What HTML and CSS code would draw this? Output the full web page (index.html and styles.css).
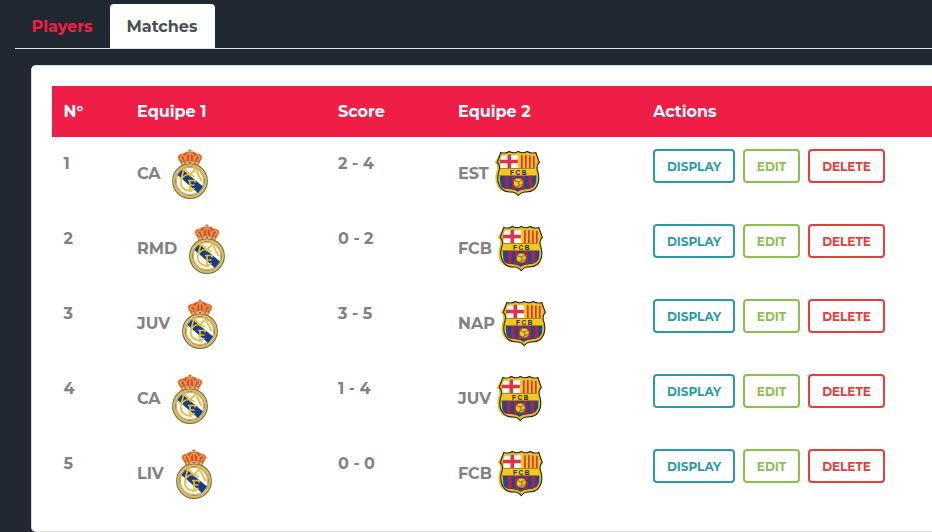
FILE: index.html
```html
<!DOCTYPE html>
<html lang="en">
<head>
<meta charset="utf-8">
<title>Matches</title>
<link rel="stylesheet" href="styles.css">
</head>
<body>
<svg class="defs" width="0" height="0" aria-hidden="true">
  <symbol id="madrid" viewBox="0 0 50 50">
    <circle cx="25" cy="32" r="17.2" fill="#fff" stroke="#756b4c" stroke-width="1.4"/>
    <circle cx="25" cy="32" r="16" fill="none" stroke="#e5b63c" stroke-width="1.6"/>
    <circle cx="25" cy="32" r="14.7" fill="none" stroke="#667280" stroke-width=".9"/>
    <circle cx="25" cy="32" r="13.6" fill="#fff" stroke="#dfb044" stroke-width="1.1"/>
    <path d="M12.500 26l4.500-6L38 37.500l-5 6.500z" fill="#173f83"/>
    <path d="M16 20.500q5-1 9 6 4-7 9-6M18.500 21.500l-2.500 9M31.500 22l5 10M29.500 28a8 8 0 1 0 0 11" fill="none" stroke="#edb936" stroke-width="1.700"/>
    <path d="M23 31.500h7v2M25 31.500V42M25 36h4.500M23 42h4" fill="none" stroke="#edb936" stroke-width="1.700"/>
    <path d="M16 14l-3-5q0-4 5-4 3-3 7-2 4-1 7 2 5 0 5 4l-3 5q-9-3-18 0z" fill="#d94d36" stroke="#d79b4e"/>
    <path d="M18 12l-3-3q1-3 4-2l2 5M21 11q-1-6 4-7 5 1 4 7M29 12l2-5q4-1 4 2l-3 3M25 5v7" fill="none" stroke="#f0b449" stroke-width="1.100"/>
    <path d="M16 13q9-3 18 0l-1 3q-8-2-16 0z" fill="#e5b45b" stroke="#a86439" stroke-width=".7"/>
    <path d="M19 14h2m3-.5h2m3 .5h2" stroke="#be344c" stroke-width="1.200"/>
    <path d="M25 0v4m-1.500-2.500h3" stroke="#c77843" stroke-width="1"/>
  </symbol>
  <symbol id="barca" viewBox="-.3 0 50 50">
    <path fill="#f2c91f" d="M8 5q5 1.500 8-1 4 2.500 9 0 5 2.500 9 0 3 2.500 8 1l3 8q-4 4-1 11 2 10-3 15-4 3-10 3-5 0-7 3-2-3-7-3-6 0-10-3-5-5-3-15 3-7-1-11z"/>
    <path fill="#fff" d="M9 6h15.500v13H7.500V14L6.500 12z"/>
    <path d="M16 5v14M6.500 12.500h18" stroke="#dd3146" stroke-width="3.600"/>
    <path d="M28.500 6v13M32.500 6v13M36.500 6v13M40.500 6.500V19" stroke="#d83343" stroke-width="1.800"/>
    <path fill="#24488b" d="M6.500 27h37l-.5 8q-1 5-5 5-9 0-13 3.500-4-3.500-13-3.500-4 0-5-5z"/>
    <path d="M13.500 27v13M20.500 27v14M29.500 27v14M37 27v13" stroke="#ad2444" stroke-width="3.800"/>
    <circle cx="25" cy="34" r="4.900" fill="#f0c62b" stroke="#745627" stroke-width=".7"/>
    <path d="M21.500 32l4 1 3-2M25.500 33v4l-3 1M25.500 37l4-2" fill="none" stroke="#745627" stroke-width=".8"/>
    <path d="M7 19.500h36M6 26.500h38" stroke="#725621" stroke-width=".6"/>
    <path d="M8 5q5 1.500 8-1 4 2.500 9 0 5 2.500 9 0 3 2.500 8 1l3 8q-4 4-1 11 2 10-3 15-4 3-10 3-5 0-7 3-2-3-7-3-6 0-10-3-5-5-3-15 3-7-1-11z" fill="none" stroke="#e8bf24" stroke-width="2.500"/>
    <path d="M7.500 3.500q5 1.500 8.500-1 4 2.500 9 0 5 2.500 9 0 3.500 2.500 8.500 1l3.500 10q-4 3-1 11 2 10-4 16-4 3-10 2.500-4 .5-6 3.500-2-3-6-3.500-6 .5-10-2.500-6-6-4-16 3-8-1-11z" fill="none" stroke="#25221e" stroke-width="1.100"/>
  </symbol>
</svg>

<nav class="tabs">
  <a class="tab">Players</a>
  <a class="tab active">Matches</a>
</nav>

<main class="card">
  <div class="row head"><div>N°</div><div>Equipe 1</div><div>Score</div><div>Equipe 2</div><div>Actions</div></div>
  <div class="row"><div class="value">1</div><div class="team"><span class="ca">CA</span><svg class="crest"><use href="#madrid"/></svg></div><div class="value">2 - 4</div><div class="team"><span class="est">EST</span><svg class="crest"><use href="#barca"/><text x="26" y="25.500" text-anchor="middle" class="crest-text">FCB</text></svg></div><div class="actions"><button class="btn display">DISPLAY</button><button class="btn edit">EDIT</button><button class="btn delete">DELETE</button></div></div>
  <div class="row"><div class="value">2</div><div class="team"><span class="rmd">RMD</span><svg class="crest"><use href="#madrid"/></svg></div><div class="value">0 - 2</div><div class="team"><span class="fcb">FCB</span><svg class="crest"><use href="#barca"/><text x="26" y="25.500" text-anchor="middle" class="crest-text">FCB</text></svg></div><div class="actions"><button class="btn display">DISPLAY</button><button class="btn edit">EDIT</button><button class="btn delete">DELETE</button></div></div>
  <div class="row"><div class="value">3</div><div class="team"><span class="juv">JUV</span><svg class="crest"><use href="#madrid"/></svg></div><div class="value">3 - 5</div><div class="team"><span class="nap">NAP</span><svg class="crest"><use href="#barca"/><text x="26" y="25.500" text-anchor="middle" class="crest-text">FCB</text></svg></div><div class="actions"><button class="btn display">DISPLAY</button><button class="btn edit">EDIT</button><button class="btn delete">DELETE</button></div></div>
  <div class="row"><div class="value">4</div><div class="team"><span class="ca">CA</span><svg class="crest"><use href="#madrid"/></svg></div><div class="value">1 - 4</div><div class="team"><span class="juv-away">JUV</span><svg class="crest"><use href="#barca"/><text x="26" y="25.500" text-anchor="middle" class="crest-text">FCB</text></svg></div><div class="actions"><button class="btn display">DISPLAY</button><button class="btn edit">EDIT</button><button class="btn delete">DELETE</button></div></div>
  <div class="row"><div class="value">5</div><div class="team"><span class="liv">LIV</span><svg class="crest"><use href="#madrid"/></svg></div><div class="value">0 - 0</div><div class="team"><span class="fcb">FCB</span><svg class="crest"><use href="#barca"/><text x="26" y="25.500" text-anchor="middle" class="crest-text">FCB</text></svg></div><div class="actions"><button class="btn display">DISPLAY</button><button class="btn edit">EDIT</button><button class="btn delete">DELETE</button></div></div>
</main>
</body>
</html>
```
FILE: styles.css
```css
* { box-sizing: border-box; }
html { height: 100%; overflow: hidden; background: #222831; }
body {
  margin: 0;
  padding: 4px 0 0 15px;
  height: 532px;
  overflow: hidden;
  background: #222831;
  color: #828282;
  font: 700 16px/24px Montserrat, Inter, sans-serif;
}
.defs { display: block; height: 0; }
.tabs { display: flex; height: 45px; border-bottom: 1px solid #dee2e6; }
.tab { width: 95px; padding: 11px 0 0 16.5px; color: #ef1e46; }
.tab.active {
  width: 105px;
  padding-left: 16.5px;
  background: #fff;
  color: #495057;
  border-radius: 4px 4px 0 0;
}
.card {
  height: 467px;
  margin: 16px 0 0 16px;
  padding: 20px 0 20px 20px;
  background: #fff;
  border: 1px solid #d9dadc;
  border-right: 0;
  border-radius: 5px 0 0 5px;
}
.row {
  display: grid;
  grid-template-columns: 73.5px 201px 120px 195px 1fr;
  height: 75px;
  padding: 12px 0 0 11.5px;
  align-items: start;
}
.row.head { height: 51px; padding-top: 0; align-items: center; background: #ef1e46; color: #fff; }
.value { padding-top: 3px; }
.team { display: flex; align-items: center; }
.team span { flex: none; white-space: nowrap; }
.ca { width: 28px; }
.rmd { width: 45px; }
.juv { width: 38px; }
.juv-away { width: 37px; }
.liv { width: 32px; }
.est { width: 35px; }
.fcb { width: 38px; }
.nap { width: 41px; }
.crest { display: block; flex: none; width: 50px; height: 50px; }
.crest-text { font: 700 6.5px "Liberation Sans", sans-serif; letter-spacing: 1.5px; fill: #252019; }
.actions { display: flex; gap: 8px; }
.btn {
  height: 34px;
  padding: 2px 0 0;
  background: #fff;
  border: 2px solid currentColor;
  border-radius: 4px;
  font: 700 12px/28px Montserrat, Inter, sans-serif;
}
.display { width: 82px; color: #2a9aaa; }
.edit { width: 57px; color: #8bc051; }
.delete { width: 77px; color: #e53e3b; }
```
